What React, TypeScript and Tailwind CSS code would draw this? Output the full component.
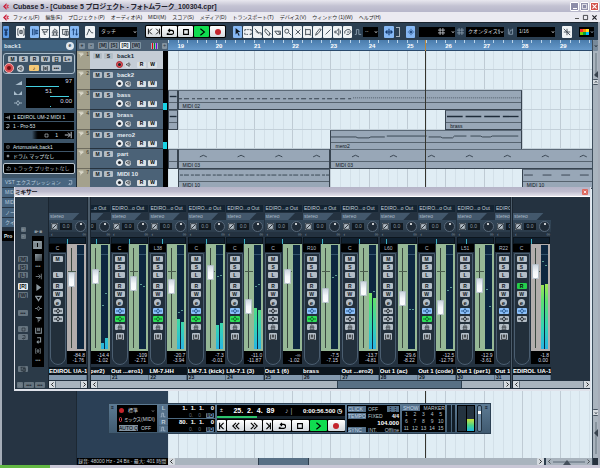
import type { ReactNode } from "react";
import { clsx } from "clsx";

/* Small line glyphs, all drawn on a 10x10 grid */
const GLYPHS: Record<string, string> = {
  wrench: "M5 1v3M3.5 1v2.5h3V1M5 4v5M4 5v4h2V5z",
  steer: "M2.5 1H1v8h1.5M7.5 1H9v8H7.5M3.5 3h3v4h-3zM3.5 5h3",
  inspector: "M2 1v8M4 1v8M6 3h3M6 5h3M6 7h3M6 2v6",
  info: "M1 2h8M2 5h6M4 8h2M1 2l3 3v3M9 2l-3 3",
  overview: "M5 1l3 3H2zM1 6h8M1 9h8M3 6v3M7 6v3",
  mixer: "M1 2h8M2 2v6h3M5 4h4v5H5zM7 4v5",
  updown: "M3 9V1M1.5 3L3 1l1.5 2M7 1v8M5.5 7L7 9l1.5-2",
  curve: "M1 9L4 2l3 4 2 0M3 2h2",
  prev: "M2 1v8M7 1L3 5l4 4",
  next: "M8 1v8M3 1l4 4-4 4",
  rewind: "M5 1L1 5l4 4M9 1L5 5l4 4",
  forward: "M1 1l4 4-4 4M5 1l4 4-4 4",
  cycle: "M1 8h6a2.5 2.5 0 0 0 0-5H4M1 8l2-2M5 1L3 3l2 2",
  stop: "M2 2h6v6H2z",
  play: "M3 1l5 4-5 4",
  phase: "M1 1h8v8H1zM8 2L2 8",
  range: "M1 2h2M4 2h2M7 2h2v2M9 6v2H7M5 8H3M2 8H1V6M1 4V2",
  split: "M1 1l5 5M2 4l4 3M6 6h3v3",
  glue: "M2 1l5 5v3H5L1 4zM7 6l2 2",
  erase: "M1 4h4l3 4H4zM5 4h3v4",
  zoom: "M6 4a2.5 2.5 0 1 1-5 0 2.5 2.5 0 0 1 5 0M6 6l3 3",
  mute: "M2 2l6 6M8 2L2 8",
  warp: "M1 2h7v6H1zM3 1v8M6 1v8",
  timewarp: "M2 1v8M2 2h6v6H2M6 8l3 1",
  draw: "M2 9l1-3 4-5 2 1-4 5z",
  line: "M2 8l6-6",
  speaker: "M1 4h2l3-3v8L3 6H1zM8 3v4",
  color: "M1 7V4l3-2h3l2 3-3 3H3M4 5h3",
  snap: "M1 5h8M5 1v8M3 3l4 4M7 3L3 7",
  scroll: "M1 5h8M5 1v8M3 3L1 5l2 2M7 3l2 2-2 2",
  auto: "M1 8h2V2h3v6h3",
  grid: "M3 0v10M7 0v10M0 3h10M0 7h10",
  swing: "M2 1v8M5 3l-2 6M8 1v8M5 3h3M3 9h5",
  cross: "M1 1l8 8M5 1v8M1 5h8",
  up: "M2 7l3-4 3 4",
  down: "M2 3l3 4 3-4",
  left: "M7 1L3 5l4 4",
  right: "M3 1l4 4-4 4",
  io: "M0 5h3M7 5h3M5 2L3 5l2 3 2-3z",
  keys: "M1 1v8h8V1M4 1v5M6 1v5",
  send: "M1 5h6M5 2l3 3-3 3M9 1v8",
  filter: "M1 2h8L5 8z",
  list: "M1 2h8M3 4h6M4 6h3M4 8h1",
  hook: "M3 1h5v6H3M5 5L3 7l2 2",
};

function Glyph({ name, className = "size-2", w = 1.1 }: { name: string; className?: string; w?: number }) {
  return (
    <svg viewBox="0 0 10 10" className={clsx("shrink-0", className)} fill="none" stroke="currentColor" strokeWidth={w}>
      <path d={GLYPHS[name]} />
    </svg>
  );
}

function Key({ children, label, className }: { children?: ReactNode; label: string; className?: string }) {
  return (
    <button
      type="button"
      aria-label={label}
      className={clsx("flex shrink-0 items-center justify-center overflow-hidden rounded-[1px] font-bold leading-none", className)}
    >
      {children}
    </button>
  );
}

const MENUS = [
  "ファイル(F)", "編集(E)", "プロジェクト(P)", "オーディオ(A)", "MIDI(M)", "スコア(S)",
  "メディア(D)", "トランスポート(T)", "デバイス(V)", "ウィンドウ (1)(W)", "ヘルプ(H)",
];

function Logo() {
  return (
    <svg viewBox="0 0 10 10" className="size-[7px] shrink-0">
      <path d="M5 0L0 5l5 5V7L3 5l2-2z" fill="#c8203c" />
      <path d="M5 2l4 1-2 2 2 2-4 1z" fill="#d94a60" />
    </svg>
  );
}

function TitleBar() {
  return (
    <header className="shrink-0">
      <div className="flex h-3 items-center bg-linear-to-b from-[#e9e8ef] via-[#c3c2d2] to-[#b7b6ca] pl-[3px]">
        <Logo />
        <h1 className="ml-[3px] flex-1 text-[7px] leading-none font-bold whitespace-nowrap text-[#22222c] [font-feature-settings:'palt']">
          Cubase 5 - [Cubase 5 プロジェクト - フォトムラーク_100304.cpr]
        </h1>
        <div className="flex gap-px pr-px">
          <Key label="最小化" className="h-[9px] w-[9px] border border-white bg-[#8c8ca8] text-white"><span className="mt-1 h-px w-1 bg-white" /></Key>
          <Key label="元に戻す" className="h-[9px] w-[9px] border border-white bg-[#8c8ca8] text-white"><Glyph name="stop" className="size-[7px]" /></Key>
          <Key label="閉じる" className="h-[9px] w-[9px] border border-white bg-[#d2524c] text-white"><Glyph name="mute" className="size-[7px]" w={1.6} /></Key>
        </div>
      </div>
      <nav className="flex h-[10px] items-center gap-[6px] bg-[#ebeaf1] pl-[3px] text-[5px] leading-none text-[#1c1c22]">
        <span className="-mr-[3px]"><Logo /></span>
        {MENUS.map((m) => (
          <button key={m} type="button" className="whitespace-nowrap">{m}</button>
        ))}
        <div className="ml-auto flex items-center gap-[2px] pr-[2px]">
          <Key label="文書を最小化" className="size-[6px]"><span className="mt-[3px] h-px w-1 bg-[#555]" /></Key>
          <Key label="文書を元に戻す"><Glyph name="stop" className="size-[7px]" /></Key>
          <Key label="文書を閉じる"><Glyph name="mute" className="size-[7px]" w={1.6} /></Key>
        </div>
      </nav>
    </header>
  );
}

const WHITE_KEY = "h-3 bg-[#f0f3f5] text-[#3c464f]";
const BLUE_KEY = "h-3 bg-[#86b8f4] text-[#123a70]";
const TOOLS = ["select", "range", "split", "glue", "erase", "zoom", "mute", "timewarp", "draw", "line", "speaker", "color"];

function DarkSelect({ label, value, className }: { label: string; value: string; className?: string }) {
  return (
    <label className={clsx("flex h-[10px] shrink-0 items-center bg-black text-[#d0d6dc]", className)}>
      <select aria-label={label} className="w-full min-w-0 appearance-none bg-transparent pl-[2px] text-[5px] leading-none">
        <option>{value}</option>
      </select>
      <Glyph name="down" className="size-1" w={2} />
    </label>
  );
}

function TransportKeys({ large }: { large?: boolean }) {
  const keys = large
    ? ["prev", "rewind", "forward", "next", "cycle", "stop", "play", "record"]
    : ["jump", "cycle", "stop", "play", "record"];
  return (
    <div className={clsx("flex h-[13px] gap-px bg-black", large ? "py-px" : "shrink-0 rounded-[2px] p-px")}>
      {keys.map((k) => (
        <Key
          key={k}
          label={k}
          className={clsx(
            "text-black",
            large ? (k === "prev" || k === "next" ? "w-[9px]" : "flex-1") : "w-[15px]",
            k === "play" ? "bg-[#10dc50]" : "bg-linear-to-b from-white to-[#d4d9de]",
          )}
        >
          {k === "record" && <span className="size-[6px] rounded-full bg-[#c4242c]" />}
          {k === "jump" && <><Glyph name="prev" className="size-[7px]" w={1.3} /><Glyph name="next" className="size-[7px]" w={1.3} /></>}
          {k !== "record" && k !== "jump" && <Glyph name={k} w={1.4} />}
        </Key>
      ))}
    </div>
  );
}

const SWATCHES = ["bg-red-500", "bg-orange-400", "bg-yellow-300", "bg-lime-500", "bg-green-600", "bg-sky-400"];

function Toolbar() {
  return (
    <div className="flex h-[18px] shrink-0 items-center border-t border-[#1a242e] bg-[#2b3f52] pl-px text-[#8fa3b5]">
      <Key label="有効化" className="h-3 w-[6px] bg-[#5b9be8] text-[#0f2c58]"><Glyph name="wrench" /></Key>
      <Key label="遅延補正" className={clsx(WHITE_KEY, "ml-[7px] w-[9px]")}><Glyph name="steer" /></Key>
      <div className="ml-[5px] flex gap-px">
        {["inspector", "info", "overview", "mixer", "updown"].map((g) => (
          <Key key={g} label={g} className={clsx(g === "inspector" || g === "updown" ? BLUE_KEY : WHITE_KEY, "w-[9px]")}><Glyph name={g} /></Key>
        ))}
      </div>
      <Key label="オートメーション" className={clsx(WHITE_KEY, "ml-[6px] w-[10px]")}><Glyph name="curve" /></Key>
      <DarkSelect label="オートメーションモード" value="タッチ" className="ml-1 w-[38px]" />
      <div className="ml-2"><TransportKeys /></div>
      <div className="ml-[7px] flex gap-px">
        {TOOLS.map((t) => (
          <Key key={t} label={t} className={clsx(t === "select" ? BLUE_KEY : WHITE_KEY, "w-[9px]")}>
            {t === "select" ? <svg viewBox="0 0 10 10" className="size-2"><path d="M2 0v8l2-2 2 4 1-1-2-4h3z" fill="#101820" /></svg> : <Glyph name={t} />}
          </Key>
        ))}
      </div>
      <span className="ml-[2px]"><Glyph name="auto" /></span>
      <DarkSelect label="ナッジ" value="--" className="ml-px w-[15px]" />
      <Key label="オートスクロール" className={clsx(BLUE_KEY, "ml-[6px] w-[10px]")}><Glyph name="scroll" w={1.4} /></Key>
      <span className="ml-[2px] h-[10px] w-1 border-y border-r border-[#aab6c0]" />
      <Key label="スナップ" className={clsx(BLUE_KEY, "ml-[6px] w-[9px]")}><Glyph name="snap" w={0.8} /></Key>
      <label className="ml-1 flex h-[10px] w-9 shrink-0 items-center justify-between bg-black text-[#d0d6dc]">
        <select aria-label="グリッド" className="w-3 appearance-none text-[5px]" />
        <Glyph name="grid" className="size-[7px]" /><Glyph name="down" className="size-1" w={2} />
      </label>
      <span className="ml-[2px]"><Glyph name="grid" className="size-[7px]" /></span>
      <DarkSelect label="グリッドの種類" value="クオンタイズ値" className="ml-[2px] w-[38px]" />
      <span className="ml-[3px]"><Glyph name="swing" className="size-[7px]" /></span>
      <DarkSelect label="クオンタイズ" value="1/16" className="ml-[3px] w-[38px]" />
      <Key label="ゼロクロス" className={clsx(WHITE_KEY, "ml-[7px] w-[10px]")}><Glyph name="cross" /></Key>
      <button type="button" aria-label="カラー" className="ml-[7px] flex h-[10px] w-[15px] shrink-0 items-center gap-px bg-black pl-px">
        <span className="grid grid-cols-3">{SWATCHES.map((s) => <span key={s} className={clsx("h-[3px] w-[3px]", s)} />)}</span>
        <Glyph name="down" className="size-1" w={2} />
      </button>
    </div>
  );
}

const GREY_KEY = "bg-[#b3bdc6] text-[#10161c]";

function ParamRow({ label, value, from, to }: { label: string; value: string; from: number; to: number }) {
  return (
    <div className="flex h-[10px] items-center gap-1 pl-3">
      <span className="flex w-2 justify-end text-[#a8bccb]">
        {label === "音量" && <svg viewBox="0 0 10 6" className="w-2"><path d="M0 6L10 0v6z" fill="currentColor" /></svg>}
        {label === "パン" && <svg viewBox="0 0 10 6" className="w-2"><path d="M0 0l4 4h2l4-4v6H0z" fill="currentColor" /></svg>}
        {label === "ディレイ" && <Glyph name="io" />}
      </span>
      <div className="relative h-full w-[48px] bg-black pr-[2px] text-right text-[6px] leading-[7px] text-[#d5dde4]">
        <span className={clsx(label === "パン" && "mr-5")}>{value}</span>
        <span className="absolute bottom-px h-px bg-[#44d0e0]" style={{ left: `${from}%`, width: `${to - from}%` }} />
      </div>
    </div>
  );
}

const SECTIONS = ["VST エクスプレッション", "MIDI モディファイア", "MIDI インサート", "ノートパッド", "クイックコントロール"];

function Inspector() {
  return (
    <aside className="flex w-[75px] shrink-0 flex-col border-r border-[#1c2833] bg-[#263443] text-[5px] leading-none text-[#dbe3ea]">
      <div className="flex h-[11px] items-center justify-between bg-[#40627f] px-[2px] text-[6px] font-bold">
        back1
        <Key label="編集" className="size-2 rounded-full bg-[#dfe7ee] text-[5px] text-[#22384c]">e</Key>
      </div>
      <div className="bg-[#3d5468] pb-1">
        <div className="mx-px mt-[2px] h-[21px] rounded-[3px] border border-[#a9bccb] pt-[2px]">
          <div className="flex gap-[2px] pl-1 text-[5px]">
            {["M", "S", "R", "W", "日", "L+"].map((k) => <Key key={k} label={k} className={clsx(GREY_KEY, "h-[6px] w-[9px]")}>{k}</Key>)}
          </div>
          <div className="mt-px flex items-center gap-[3px]">
            <Key label="録音可能" className="size-[10px] rounded-full border border-[#f1b3b3] bg-[#d94a4e]"><span className="size-1 rounded-full bg-[#6e1418]" /></Key>
            <Key label="モニター" className="size-[7px] rounded-full bg-[#c7d0d8] text-black"><Glyph name="speaker" className="size-[5px]" /></Key>
            <Key label="入力変換" className="ml-[2px] h-[6px] w-[10px] bg-[#f4c877] text-[5px] text-black">♪</Key>
            <Key label="ロック" className={clsx(GREY_KEY, "-ml-px h-[6px] w-[9px]")}><Glyph name="steer" className="size-[5px]" /></Key>
            <Key label="レーン" className={clsx(GREY_KEY, "-ml-px h-[6px] w-[9px] text-[5px]")}>•••</Key>
          </div>
        </div>
        <div className="mt-1 flex flex-col">
          <ParamRow label="音量" value="97" from={0} to={68} />
          <ParamRow label="パン" value="51" from={50} to={90} />
          <ParamRow label="ディレイ" value="0.00" from={49} to={53} />
        </div>
        <div className="mt-[5px] flex flex-col gap-px px-[2px] whitespace-nowrap">
          <span className="flex h-2 items-center gap-[3px] bg-black px-px"><Glyph name="send" className="size-[5px]" />1 EDIROL UM-2 MIDI 1</span>
          <span className="flex h-2 items-center gap-[3px] bg-black px-px"><Glyph name="hook" className="size-[5px]" />1 - Pro-53</span>
          <span className="flex h-2 items-center justify-end gap-[6px] bg-linear-to-r from-[#3d5468] from-40% to-black to-50% px-[2px]"><Glyph name="stop" className="size-[5px]" />1<Glyph name="send" /></span>
        </div>
        <div className="mt-1 flex flex-col gap-px px-[2px] whitespace-nowrap">
          <span className="flex h-2 items-center gap-[3px] bg-black px-[2px]"><Glyph name="stop" className="size-1" />Artomusiek,back1</span>
          <span className="flex h-2 items-center gap-[3px] bg-black px-[2px]"><Glyph name="snap" className="size-1" />ドラム マップなし</span>
        </div>
        <div className="mx-px mt-[3px] flex h-[11px] items-center gap-[2px] rounded-[2px] border border-[#b9c5cf] bg-black px-[2px] whitespace-nowrap text-[#a9b3bc]">
          <Glyph name="cycle" className="size-[5px]" />トラック プリセットなし
        </div>
      </div>
      {SECTIONS.map((s) => (
        <button key={s} type="button" className="flex h-[10px] shrink-0 items-center justify-between border-b border-[#263443] bg-[#486580] px-[3px] text-left whitespace-nowrap text-[#b7cbdc]">
          {s}
          {s.startsWith("VST") && <Glyph name="hook" className="size-[6px]" />}
        </button>
      ))}
      <div className="mt-[3px] flex h-[10px] items-center bg-black pl-[2px] font-bold">Pro</div>
    </aside>
  );
}

type Track = { name: string; height: string; level?: boolean; active?: boolean };
const TRACKS: Track[] = [
  { name: "back1", height: "h-[19px]", active: true },
  { name: "back2", height: "h-[20px]" },
  { name: "bass", height: "h-[20px]", level: true },
  { name: "brass", height: "h-[20px]" },
  { name: "mero2", height: "h-[19px]", level: true },
  { name: "part", height: "h-[20px]" },
  { name: "MIDI 10", height: "h-[20px]" },
];

function TrackRow({ track, index }: { track: Track; index: number }) {
  return (
    <li className={clsx("flex shrink-0", track.height)}>
      <span className="flex w-[13px] justify-between border-b border-[#6f6c5e] bg-[#a4a18d] p-px text-[5px] leading-none text-[#38362c]">
        <span className="text-[#e9e7da]"><Glyph name="list" className="size-[6px]" w={1.4} /></span>{index + 1}
      </span>
      <div className={clsx("flex-1 border-b border-[#26323e] pt-[2px] pl-[3px]", track.active ? "bg-[#c5cdd6] text-[#22303d]" : "bg-[#4b6277] text-[#e3eaf0]")}>
        <div className="flex items-center gap-[2px] text-[5px] leading-none">
          <Key label="ミュート" className={clsx(GREY_KEY, "h-[6px] w-[9px]")}>M</Key>
          <Key label="ソロ" className={clsx(GREY_KEY, "h-[6px] w-[9px]")}>S</Key>
          <span className="ml-[2px] h-[6px] text-[6px] leading-none font-bold">{track.name}</span>
        </div>
        <div className="mt-[2px] flex items-center gap-[2px] pl-[23px] text-[5px]">
          <Key label="録音可能" className={clsx("size-[7px] rounded-full border", track.active ? "border-[#a8242c] bg-[#e2555a]" : "border-white bg-[#d5dbe0]")}><span className="size-[3px] rounded-full bg-[#20262c]" /></Key>
          <Key label="モニター" className="size-[6px] rounded-full bg-[#d5dbe0] text-black"><Glyph name="speaker" className="size-[5px]" /></Key>
          <Key label="読込" className="ml-1 h-[6px] w-[9px] bg-[#d9dfe4] text-black">R</Key>
          <Key label="書込" className="h-[6px] w-[9px] bg-[#d9dfe4] text-black">W</Key>
        </div>
      </div>
      <span className="flex w-[5px] items-end bg-black">{track.level && <span className="h-[7px] w-1 bg-[#18d2e4]" />}</span>
    </li>
  );
}

function TrackList() {
  return (
    <section className="flex w-[91px] shrink-0 flex-col bg-[#2b4056]">
      <div className="flex h-[11px] shrink-0 items-center gap-px bg-[#4b6074] pl-[2px] text-[5px] text-[#1b242d]">
        <Key label="追加" className="h-[6px] w-[6px] bg-[#7c8c9a]">+</Key>
        <Key label="削除" className="mr-[3px] ml-[2px] h-[6px] w-[6px] bg-[#7c8c9a]">-</Key>
        {["[M]", "[S]", "[R]", "[W]"].map((k) => (
          <Key key={k} label={k} className={clsx("h-[7px] w-[10px]", k === "[R]" ? "bg-[#e8edf1]" : "bg-[#8493a0]")}>{k}</Key>
        ))}
        <span className="ml-[9px] flex h-[6px] gap-px bg-[#a5b0ba] px-px"><i className="w-px bg-red-600" /><i className="w-px bg-green-700" /><i className="w-px bg-violet-700" /></span>
        <Key label="分割" className="ml-[3px] h-[6px] w-[5px] bg-[#8493a0]">÷</Key>
      </div>
      <ul>{TRACKS.map((t, i) => <TrackRow key={t.name} track={t} index={i} />)}</ul>
      <div className="mt-auto flex h-[7px] shrink-0 items-center overflow-hidden bg-black pl-px text-[5px] leading-none whitespace-nowrap text-[#c9d1d8]">
        録音: 48000 Hz - 24 Bit - 最大: 401 時間
      </div>
    </section>
  );
}

/* bar number -> percent across the arranger */
const at = (bar: number) => (((bar - 19) * 38.25 + 9.5) / 424) * 100;
const BARS = [19, 20, 21, 22, 23, 24, 25, 26, 27, 28, 29];
const BEATS = Array.from({ length: 45 }, (_, i) => 18.75 + i * 0.25);

type Clip = { from: number; to: number; label?: string; kind: "dots" | "arcs" | "bars" | "melody" | "dashes" };
const CLIPS: Clip[][] = [
  [],
  [],
  [{ from: 18.75, to: 19, kind: "bars" }, { from: 19, to: 28, label: "MIDI 02", kind: "dots" }],
  [{ from: 18.75, to: 19, kind: "bars" }, { from: 26, to: 28, label: "brass", kind: "bars" }],
  [{ from: 23, to: 28, label: "mero2", kind: "melody" }],
  [{ from: 18.75, to: 19, kind: "arcs" }, { from: 19, to: 23, label: "MIDI 03", kind: "arcs" }, { from: 23, to: 30.1, label: "MIDI 03", kind: "arcs" }],
  [{ from: 19, to: 23, label: "MIDI 10", kind: "dashes" }, { from: 28, to: 30.1, label: "MIDI 10", kind: "dashes" }],
];

function Notes({ clip }: { clip: Clip }) {
  const width = (clip.to - clip.from) * 38;
  return (
    <svg viewBox={`0 0 ${width} 12`} preserveAspectRatio="none" className="h-3 w-full" fill="none" stroke="#37434f" strokeWidth={1}>
      {clip.kind === "dots" && <><path d="M0 8.5H174" strokeDasharray="3 2 5 3" /><path d="M174 7.5h168" strokeDasharray="1 1" /></>}
      {clip.kind === "dashes" && <path d={`M1 5.5H${width}`} strokeDasharray={clip.from === 28 ? "9 10" : "3 1 5 2"} />}
      {clip.kind === "bars" && <path d={`M1 6H${width}`} strokeWidth={1.5} stroke="#1f2c3a" strokeDasharray={clip.label ? "16 3" : undefined} />}
      {clip.kind === "melody" && <path d="M0 6.5h25l2 1h11l2-1h14M56 5.5h40M98 6.5h12l2 1h10l2-2h12M140 5.5h10l2 1h8l2-1h26" />}
      {clip.kind === "arcs" && Array.from({ length: Math.ceil(clip.to - clip.from) }, (_, i) => (
        <path key={i} d={`M${i * 38 + 21} 7.5l2-1q1.500-1.500 3 0l2 1`} />
      ))}
    </svg>
  );
}

function Arranger() {
  return (
    <section className="flex min-w-0 flex-1 flex-col">
      <div className="relative flex min-h-0 flex-1 flex-col overflow-hidden bg-[#e0edf4]">
        <div className="relative h-[11px] shrink-0 border-b border-[#2a4a6c] bg-linear-to-b from-[#4a7cac] to-[#6699ca]">
          {BEATS.map((b) => <span key={b} className="absolute top-0 h-[3px] w-px bg-[#b9d2e8]" style={{ left: `${at(b)}%` }} />)}
          {BARS.map((b) => (
            <span key={b} className="absolute top-[3px] text-[6px] leading-[7px] font-bold text-white" style={{ left: `${at(b)}%` }}>{b}</span>
          ))}
        </div>
        <div className="relative flex-1">
          {BEATS.map((b) => (
            <span key={b} className={clsx("absolute inset-y-0 w-px", Number.isInteger(b) ? "bg-[#bfcbd4]" : "bg-[#d3e0e8]")} style={{ left: `${at(b)}%` }} />
          ))}
          {TRACKS.map((t, i) => (
            <div key={t.name} className={clsx("relative border-b border-[#c3d0d9]", t.height)}>
              {CLIPS[i].map((c) => (
                <div
                  key={c.from}
                  className="absolute top-0 flex h-[20px] flex-col overflow-hidden border border-t-[#5b6977] border-r-[#37434f] border-b-[#37434f] border-l-[#37434f] bg-[#98a7b7]"
                  style={{ left: `${at(c.from)}%`, width: `${at(c.to) - at(c.from)}%` }}
                >
                  <Notes clip={c} />
                  <span className="h-[7px] shrink-0 border-t border-[#56636f] pl-1 text-[5px] leading-[6px] text-[#0f161d]">{c.label}</span>
                </div>
              ))}
            </div>
          ))}
        </div>
        <span className="absolute top-0 bottom-0 w-px bg-[#35352e]" style={{ left: `${at(25.47)}%` }} />
        <span className="absolute top-0 h-[11px] w-px bg-[#b7863c]" style={{ left: `${at(25.47)}%` }} />
      </div>
      <div className="flex h-[7px] shrink-0 bg-[#a9b4be]">
        <Key label="左へ" className="w-[7px] bg-[#d5dbe0] text-black"><Glyph name="left" className="size-[5px]" w={1.6} /></Key>
        <span className="w-[83px]" />
        <span className="w-[51px] border-x border-[#2d3e4e] bg-[#587085]" />
        <Key label="右へ" className="ml-auto w-[7px] bg-[#d5dbe0] text-black"><Glyph name="right" className="size-[5px]" w={1.6} /></Key>
        <span className="flex w-12 items-center justify-between border-l-2 border-[#2d3e4e] px-px text-black">
          <Glyph name="left" className="size-[5px]" />
          <svg viewBox="0 0 32 6" className="h-[6px] w-8"><path d="M0 3h32" stroke="#5d6b78" /><path d="M10 6l4-5 4 5z" fill="#44505c" /></svg>
          <Glyph name="right" className="size-[5px]" />
        </span>
      </div>
    </section>
  );
}

function VerticalScroll() {
  return (
    <div className="flex w-[6px] shrink-0 flex-col items-center border-l border-[#3d4d5b] bg-[#a9b4be] text-[#1c262f]">
      <Key label="表示" className="h-[11px] w-full bg-[#77899a]"><Glyph name="down" className="size-1" w={2} /></Key>
      <svg viewBox="0 0 6 28" className="h-7 w-[6px]"><path d="M3 2v24" stroke="#66747f" /><path d="M5 20v7L1 24z" fill="#37434e" /></svg>
      <Key label="上へ" className="h-[6px] w-full border-y border-[#44525f] bg-[#d5dbe0]"><Glyph name="up" className="size-1" w={1.8} /></Key>
      <Key label="下へ" className="mt-auto h-[7px] w-full border-y border-[#44525f] bg-[#d5dbe0]"><Glyph name="down" className="size-1" w={1.8} /></Key>
      <svg viewBox="0 0 6 42" className="h-[42px] w-[6px]"><path d="M3 6v32" stroke="#66747f" /><path d="M5 13v8L1 17z" fill="#37434e" /></svg>
      <span className="h-[7px] w-full bg-[#26323e]" />
    </div>
  );
}

type Channel = {
  name: string; num?: string; pan: string; panAt: number; fader: number; peak: string; gain: string;
  levels?: [number, number]; marks?: [number, number]; blue?: boolean; green?: boolean; bus?: boolean; read?: boolean;
};

/* fader: centre of the cap, levels: top of each meter bar, in px from the top of the strip */
const INPUT: Channel = { name: "EDIROL UA-1", pan: "C", panAt: 48, fader: 35, peak: "-84.8", gain: "-1.76", bus: true };
const OUTPUT: Channel = { name: "EDIROL UA-1", pan: "C", panAt: 48, fader: 27, peak: "-1.8", gain: "0.00", bus: true, blue: true, read: true, levels: [40, 39], marks: [16, 20] };
const FIRST: Channel = { name: "Out ...per2)", num: "20", pan: "C", panAt: 62, fader: 32, peak: "-14.4", gain: "-1.02", levels: [98, 93], marks: [60, 48] };
const LAST: Channel = { name: "Out 1", num: "31", pan: "R22", panAt: 60, fader: 40, peak: "-20", gain: "-4", blue: true };
const CHANNELS: Channel[] = [
  { name: "Out ...ero1)", num: "21", pan: "C", panAt: 48, fader: 39, peak: "-109", gain: "-2.71", marks: [39, 41], blue: true, green: true },
  { name: "LM-7.HH", num: "22", pan: "L38", panAt: 32, fader: 42, peak: "-20.7", gain: "-3.94", levels: [74, 77], marks: [67, 65], blue: true, green: true },
  { name: "LM-7.1 (kick)", num: "23", pan: "C", panAt: 48, fader: 28, peak: "-7.3", gain: "-0.01", levels: [80, 78], marks: [31, 30], blue: true, green: true },
  { name: "LM-7.1 (3)", num: "24", pan: "C", panAt: 48, fader: 62, peak: "-11.0", gain: "-11.87", levels: [63, 65], marks: [41, 39], blue: true, green: true },
  { name: "Out 1 (6)", num: "25", pan: "C", panAt: 48, fader: 32, peak: "-∞", gain: "-1.02" },
  { name: "brass", num: "26", pan: "R10", panAt: 52, fader: 51, peak: "-7.5", gain: "-7.15", marks: [32, 30], blue: true, green: true },
  { name: "Out ...ero2)", num: "27", pan: "C", panAt: 48, fader: 44, peak: "-13.7", gain: "-4.81", levels: [48, 53], marks: [50, 46], blue: true },
  { name: "Out 1 (ac)", num: "28", pan: "L60", panAt: 15, fader: 54, peak: "-29.6", gain: "-8.22", marks: [64, 64] },
  { name: "Out 1 (code)", num: "29", pan: "C", panAt: 48, fader: 63, peak: "-12.5", gain: "-12.79", marks: [45, 42], blue: true, green: true },
  { name: "Out 1 (per1)", num: "30", pan: "L51", panAt: 25, fader: 41, peak: "-12.9", gain: "-3.61", marks: [44, 61], blue: true },
];

const STRIP_KEY = "h-[6px] w-[10px] text-[5px]";

function Meter({ levels, marks }: Pick<Channel, "levels" | "marks">) {
  return (
    <svg viewBox="0 0 7 104" className="h-[104px] w-[7px] bg-[#0d2740]">
      <defs>
        <linearGradient id="level" gradientUnits="userSpaceOnUse" x1="0" y1="30" x2="0" y2="104">
          <stop offset="0" stopColor="#c4ec44" />
          <stop offset="0.35" stopColor="#5ce070" />
          <stop offset="0.7" stopColor="#34d4b4" />
          <stop offset="1" stopColor="#28b4e4" />
        </linearGradient>
      </defs>
      <path d="M0 9.500h7" stroke="#33536c" />
      {marks && <path d={`M1 ${marks[0]}.5h2M4 ${marks[1]}.5h2`} stroke="#5c9c94" />}
      {levels && <path d={`M0 104V${levels[0]}h3v${104 - levels[0]}zM4 104V${levels[1]}h3v${104 - levels[1]}z`} fill="url(#level)" />}
    </svg>
  );
}

function Strip({ c }: { c: Channel }) {
  return (
    <article className="flex w-[38px] flex-col text-[5px] leading-none text-[#c6d1da]">
      <div className={clsx("mr-px h-[7px] overflow-hidden pl-px text-[5px] leading-[7px] whitespace-nowrap", !c.bus && "bg-[#132331]")}>{!c.bus && "EDIRO...o Out"}</div>
      <div className="mt-px h-[7px] w-full bg-[#43586c] pl-px text-[5px] leading-[6px] text-[#aebdca] [clip-path:polygon(0_0,80%_0,62%_100%,0_100%)]">stereo</div>
      <div className="flex h-3 items-center gap-[2px] bg-linear-to-b from-[#334759] to-[#2b3b4a] pl-[2px]">
        <Key label="位相" className="size-[7px] bg-[#b3bdc6] text-[#20282f]"><Glyph name="phase" className="size-[7px]" w={1.3} /></Key>
        <span className="flex h-[7px] w-3 items-center justify-center bg-[#10181f] text-[#8c9aa4]">0.0</span>
        <span className="ml-px flex size-[11px] items-start justify-center rounded-full border border-[#59697a] bg-[#202c38] pt-px"><i className="size-[2px] rounded-full bg-white" /></span>
      </div>
      <div className="flex h-[5px] items-center justify-between pr-px pl-[2px] text-[#8292a0]"><span>‹</span><span>∞</span></div>
      <div className="relative mr-px h-[7px] border border-[#0b141c] bg-[#10202f]">
        <span className="absolute top-px h-[5px] w-px bg-[#3bb1c4]" style={{ left: `${c.panAt}%` }} />
      </div>
      <div className="flex h-[121px]">
        <div className="flex w-[17px] flex-col items-center">
          <span className="flex h-[8px] w-full items-center justify-center bg-black text-[#b2bdc6]">{c.pan}</span>
          <div className="mt-px flex w-4 flex-1 flex-col items-center gap-[2px] rounded-b-[8px] border border-[#4b5e70] bg-[#222f3b] pt-[2px]">
            <Key label="ミュート" className={clsx(GREY_KEY, STRIP_KEY)}>M</Key>
            {c.bus && !c.read ? <span className="h-[6px]" /> : <Key label="ソロ" className={clsx(GREY_KEY, STRIP_KEY)}>S</Key>}
            <Key label="リッスン" className={clsx(GREY_KEY, STRIP_KEY)}>L</Key>
            <Key label="読込" className={clsx(c.read ? "bg-[#26cf4c] text-black" : GREY_KEY, STRIP_KEY, "mt-[3px]")}>R</Key>
            <Key label="書込" className={clsx(GREY_KEY, STRIP_KEY)}>W</Key>
            <Key label="編集" className="size-[7px] rounded-full bg-[#b4bec7] text-[6px] text-[#101820]">e</Key>
            <Key label="インサート" className={clsx(c.blue ? "bg-[#8cc0fa] text-[#1f5088]" : GREY_KEY, STRIP_KEY)}><Glyph name="io" /></Key>
            <Key label="EQ" className={clsx(c.green ? "bg-[#2ee058] text-[#0b5a24]" : GREY_KEY, STRIP_KEY)}><Glyph name="io" /></Key>
            {!c.bus && <>
              <Key label="センド" className={clsx(GREY_KEY, STRIP_KEY)}><Glyph name="overview" className="size-[6px]" w={0.9} /></Key>
              <Key label="インストゥルメント" className="mt-px h-[7px] w-2 bg-[#b3bdc6] text-black"><Glyph name="keys" className="size-[6px]" /></Key>
            </>}
          </div>
        </div>
        <div className="ml-px flex w-[19px] flex-col">
          <div className={clsx("relative flex h-[107px] justify-between pt-px pr-[2px] pl-px", c.bus ? "bg-[#b2adac]" : "bg-[#96b896]")}>
            <span className="absolute top-[4px] bottom-[3px] left-[4px] w-px bg-[#39473f]" />
            <span className="absolute top-[27px] left-px h-px w-[8px] bg-[#4a5d4c]" />
            <input
              type="range"
              aria-label={`フェーダー ${c.name}`}
              min={0}
              max={89}
              defaultValue={89 - (c.fader - 8)}
              className="relative h-[104px] w-[7px] appearance-none bg-transparent [direction:rtl] [writing-mode:vertical-lr] [&::-webkit-slider-thumb]:h-[15px] [&::-webkit-slider-thumb]:w-[7px] [&::-webkit-slider-thumb]:appearance-none [&::-webkit-slider-thumb]:rounded-[2px] [&::-webkit-slider-thumb]:bg-linear-to-b [&::-webkit-slider-thumb]:from-[#c8d2dc] [&::-webkit-slider-thumb]:via-[#f4f7fa] [&::-webkit-slider-thumb]:to-white [&::-webkit-slider-thumb]:shadow-[inset_0_0_0_1px_#b4c0ca]"
            />
            <Meter levels={c.levels} marks={c.marks} />
          </div>
          <div className="flex h-[13px] flex-col items-end justify-center bg-black pr-px text-[5px] leading-[5px] text-[#d3dae0]">
            <span>{c.peak}</span><span className="mr-px">{c.gain}</span>
          </div>
        </div>
      </div>
      <div className="mt-[2px] h-2 overflow-hidden bg-[#0b141c] text-[6px] leading-[8px] font-bold whitespace-nowrap text-white">{c.name}</div>
      <div className="h-[5px] border-r border-[#5a6d80] bg-[#8298ad] pl-px text-[5px] leading-[5px] font-bold text-[#0d151c]">{c.num}</div>
    </article>
  );
}

function ScrollBar({ children }: { children?: ReactNode }) {
  return (
    <div className="mt-px flex h-[7px] bg-[#a9b4be] text-black">
      <Key label="左へ" className="w-[7px] border-r border-[#5c6b78] bg-[#d5dbe0]"><Glyph name="left" className="size-[5px]" w={1.6} /></Key>
      <div className="flex flex-1">{children}</div>
      <Key label="右へ" className="w-[7px] border-l border-[#5c6b78] bg-[#d5dbe0]"><Glyph name="right" className="size-[5px]" w={1.6} /></Key>
    </div>
  );
}

function MixerCommands() {
  const key = "h-[6px] w-[10px] bg-[#66747f] text-[5px] text-[#1a232b]";
  return (
    <div className="flex w-[33px] shrink-0 flex-col bg-[#2b3a48] text-[#8c989f]">
      <div className="flex h-[184px] pt-[30px]">
        <div className="flex w-[17px] flex-col items-center gap-[2px] pr-px">
          <Key label="広く" className="h-[5px] w-[5px] bg-[#66747f] text-[5px]">+</Key>
          <Key label="狭く" className="h-[5px] w-[5px] bg-[#66747f] text-[5px]">-</Key>
          <span className="h-[13px]" />
          <Key label="M" className={key}>[M]</Key>
          <Key label="S" className={key}>[S]</Key>
          <Key label="L" className={key}>[L]</Key>
          <Key label="R" className="mt-[3px] h-[7px] w-[10px] bg-[#e6ebef] text-[5px] text-black">[R]</Key>
          <Key label="W" className={key}>[W]</Key>
          <Key label="リセット" className={clsx(key, "mt-[10px]")}>•••</Key>
          <Key label="コピー" className={clsx(key, "mt-2")}><Glyph name="stop" className="size-[5px]" /></Key>
          <Key label="貼り付け" className={key}><Glyph name="hook" className="size-[5px]" /></Key>
          <Key label="設定" className={clsx(key, "mt-auto mb-[9px]")}><Glyph name="mixer" className="size-[6px]" /></Key>
        </div>
        <div className="flex flex-col items-center">
          <span className="h-[9px] pt-[2px] text-[5px] leading-none">■▪■</span>
          <div className="flex h-[131px] w-3 flex-col items-center justify-between bg-black py-[4px]">
            <Glyph name="warp" className="size-[10px]" w={1.8} />
            <span className="size-[7px] bg-linear-to-br from-[#8c989f] to-[#30383e]" />
            <span className="text-[5px] leading-none">•••</span>
            <Glyph name="send" className="size-[7px]" />
            <svg viewBox="0 0 10 10" className="size-[7px]"><path d="M2 0l7 5-7 5z" fill="currentColor" /></svg>
            <Glyph name="filter" className="size-[7px]" w={2} />
            <Glyph name="io" className="size-[7px]" />
            <Glyph name="list" className="size-[7px]" w={1.5} />
            <Glyph name="keys" className="size-[7px]" w={1.5} />
            <Glyph name="hook" className="size-[7px]" w={1.5} />
            <Glyph name="steer" className="size-[6px]" />
            <span className="text-[5px] leading-none">•••</span>
          </div>
        </div>
      </div>
      <div className="flex gap-px pt-px pl-[2px]">
        <Key label="全表示" className="h-[6px] w-[6px] bg-[#66747f]"><Glyph name="stop" className="size-1" /></Key>
        <Key label="保存" className={key}>•••</Key>
        <Key label="呼出" className={key}>•••</Key>
      </div>
    </div>
  );
}

function MixerWindow() {
  return (
    <section aria-label="ミキサー" className="absolute top-[187px] right-[9px] left-[14px] border-x border-b-2 border-[#dfe2ea] bg-[#243240]">
      <div className="flex h-[10px] items-center justify-between border-b border-white bg-linear-to-b from-[#b5b4c8] via-[#bdbccd] to-[#e4e2ea] pr-[2px]">
        <h2 className="text-[6px] leading-none font-bold text-[#15151c] [font-feature-settings:'palt']">ミキサー</h2>
        <Key label="ミキサーを閉じる" className="size-[6px] bg-[#dd6a60] text-white"><Glyph name="mute" className="size-1" w={2} /></Key>
      </div>
      <div className="flex pb-px">
        <MixerCommands />
        <div className="w-[39px] shrink-0 border-l border-[#1a2530] pt-2"><Strip c={INPUT} /><ScrollBar /></div>
        <span className="w-1 shrink-0 border-x border-[#1a2530] bg-[#4b5b69]" />
        <div className="min-w-0 flex-1 pt-2">
          <div className="flex overflow-hidden">
            <div className="flex w-5 shrink-0 justify-end overflow-hidden">
              <div className="shrink-0"><Strip c={FIRST} /></div>
            </div>
            <div className="grid flex-1 grid-cols-10">{CHANNELS.map((c) => <Strip key={c.num} c={c} />)}</div>
            <div className="w-[15px] shrink-0 overflow-hidden"><Strip c={LAST} /></div>
          </div>
          <ScrollBar>
            <span className="w-[59%]" />
            <span className="w-[31%] border-x border-[#2d3e4e] bg-[#587085]" />
          </ScrollBar>
        </div>
        <span className="w-[3px] shrink-0 border-x border-[#1a2530] bg-[#4b5b69]" />
        <div className="w-[77px] shrink-0 pt-2"><Strip c={OUTPUT} /><ScrollBar /></div>
      </div>
    </section>
  );
}

function Locator({ side, value }: { side: string; value: string }) {
  return (
    <div className="flex h-[13px]">
      <div className="flex w-[9px] flex-col gap-px text-[6px] leading-[6px] text-[#b9cad8]">
        <Key label={`${side} ロケーター`} className="h-[6px] bg-[#54708a]">{side}</Key>
        <span className="h-[6px] bg-[#54708a] pl-px"><Glyph name="auto" className="size-[6px]" /></span>
      </div>
      <div className="flex flex-1 flex-col items-end bg-black pr-px text-white">
        <span className="text-[6px] leading-[7px] font-bold whitespace-pre">{value}</span>
        <span className="flex items-center gap-[5px] text-[5px] leading-[6px] text-[#63717d]"><span>0.</span><span>0</span><Key label="パンチ" className="h-[5px] w-2 bg-[#66849f] text-[5px] text-black">I/O</Key></span>
      </div>
    </div>
  );
}

function TransportPanel() {
  const tag = "w-[18px] bg-[#54708a] text-[#c3d5e4]";
  return (
    <section aria-label="トランスポート" className="absolute top-[403px] left-[108px] flex h-[31px] items-stretch gap-[2px] border border-[#2c4053] bg-linear-to-b from-[#5d7b94] to-[#405a70] p-px">
      <span className="w-[5px] text-center text-[5px] leading-none text-black">≡</span>
      <div className="flex w-10 flex-col gap-[2px] bg-black px-[2px] pt-[2px] text-[5px] leading-[7px] text-[#cbd3da]">
        <span className="flex items-center gap-1"><i className="size-[5px] rounded-full bg-[#c4242c]" />標準<span className="ml-auto"><Glyph name="down" className="size-1" /></span></span>
        <span className="flex items-center gap-[2px] whitespace-nowrap [font-feature-settings:'palt']"><i className="size-[5px] rounded-full border border-[#e0444c]" />ミックス(MIDI)</span>
        <span className="mt-auto mb-px flex h-[6px] items-center gap-[3px] text-[5px] leading-[6px] whitespace-nowrap"><span className="bg-[#8494a2] text-black">AUTO Q</span>OFF</span>
      </div>
      <div className="flex w-[56px] flex-col gap-px">
        <Locator side="L" value="1.  1.  1.    0" />
        <Locator side="R" value="80.  1.  1.    0" />
      </div>
      <div className="flex w-[128px] flex-col">
        <div className="flex h-[11px] items-center justify-between bg-black px-[3px] text-white">
          <span className="text-[5px]">±</span>
          <span className="text-[7px] leading-none font-bold">25.&nbsp; 2.&nbsp; 4.&nbsp; 89</span>
          <span className="text-[7px] leading-none text-[#9aa5ae]">♪ |</span>
          <span className="text-[6px] leading-none font-bold whitespace-nowrap">0:00:56.500 ◷</span>
        </div>
        <div className="h-[3px] bg-[#16222c]"><div className="h-[2px] w-[31%] bg-[#2cc46c]" /></div>
        <TransportKeys large />
      </div>
      <div className="flex w-[53px] flex-col gap-px bg-black p-px text-[5px] leading-[6px] text-[#b9c5cf]">
        <div className="flex gap-[2px]"><span className={tag}>CLICK</span>OFF<b className="ml-auto bg-[#54708a] px-px text-black">⋮⋮</b></div>
        <div className="flex gap-[2px]"><span className={tag}>TEMPO</span>FIXED<b className="ml-auto text-white">4/4</b></div>
        <b className="self-end text-[6px] leading-[6px] text-white">104.000</b>
        <div className="flex gap-[2px]"><span className={tag}>SYNC</span>INT.<span className="ml-auto">Offline</span></div>
      </div>
      <div className="flex w-[43px] flex-col bg-black text-[5px] leading-[6px] text-[#b9c5cf]">
        <div className="flex justify-between"><span className="bg-[#54708a] px-px text-[#c3d5e4]">SHOW</span><span>MARKER</span></div>
        <div className="grid flex-1 grid-cols-5 place-items-center">
          {Array.from({ length: 15 }, (_, i) => <button key={i} type="button" className="leading-none">{i + 1}</button>)}
        </div>
      </div>
      <div className="flex w-2 gap-px"><i className="flex-1 bg-[#111c26]" /><i className="flex-1 bg-[#111c26]" /></div>
      <div className="grid w-[18px] grid-cols-2 gap-px bg-black p-px">
        <i className="bg-[#243340]" />
        <span className="flex items-end bg-[#243340]"><i className="h-3 w-full bg-linear-to-t from-[#23b4e0] via-[#4cd480] to-[#c4e030]" /></span>
      </div>
      <input
        type="range"
        aria-label="出力レベル"
        defaultValue={78}
        className="h-full w-[5px] appearance-none rounded-[2px] border border-[#1f2f3d] bg-[#6d89a2] [direction:rtl] [writing-mode:vertical-lr] [&::-webkit-slider-thumb]:size-[3px] [&::-webkit-slider-thumb]:appearance-none [&::-webkit-slider-thumb]:bg-white"
      />
      <span className="w-[5px] text-center text-[5px] leading-none text-black">≡</span>
    </section>
  );
}

export default function App() {
  return (
    <main className="relative flex h-screen flex-col overflow-hidden bg-[#263443] font-['Liberation_Sans','Noto_Sans_CJK_JP',sans-serif]">
      <TitleBar />
      <div className="flex min-h-0 flex-1 flex-col border-x-2 border-[#a5adb8]">
        <Toolbar />
        <div className="flex min-h-0 flex-1">
          <Inspector />
          <TrackList />
          <Arranger />
          <VerticalScroll />
        </div>
      </div>
      <MixerWindow />
      <TransportPanel />
      <div className="flex h-[3px] shrink-0 bg-[#c9c7d6]"><span className="w-[50px] bg-[#63b844]" /></div>
    </main>
  );
}
